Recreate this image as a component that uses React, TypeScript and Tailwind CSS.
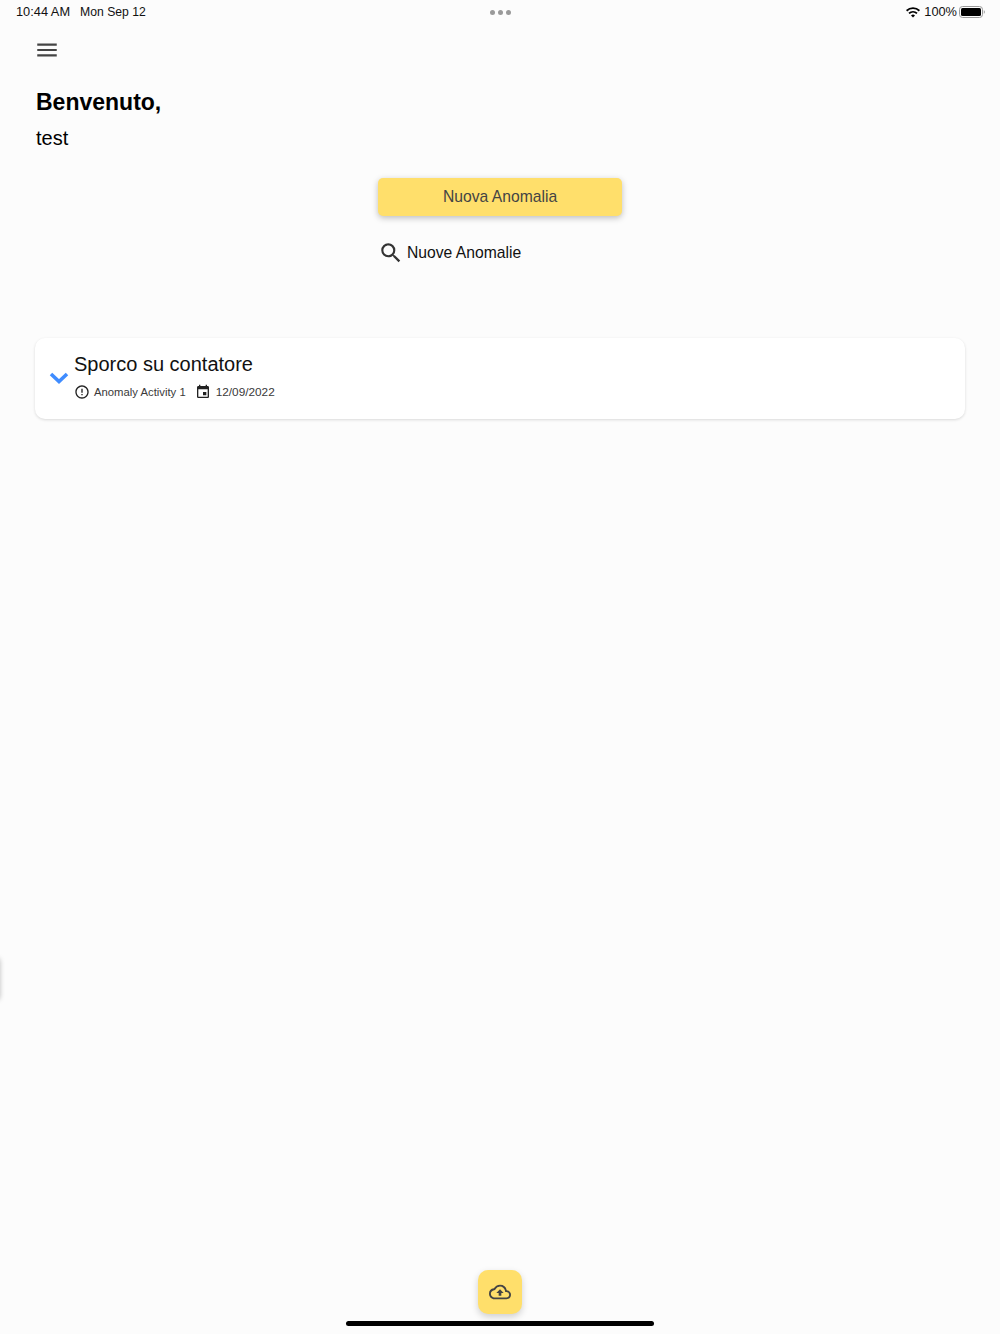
import { MdMenu, MdSearch, MdErrorOutline, MdEvent, MdOutlineCloudUpload } from "react-icons/md";

export default function App() {
  return (
    <div className="relative flex h-[1334px] w-[1000px] flex-col overflow-hidden bg-[#fcfcfc] font-['Liberation_Sans',Arial,sans-serif] text-black">
      {/* status bar */}
      <div className="flex h-6 shrink-0 items-center justify-between pl-4 pr-[15px] text-[13px] leading-6 text-[#111]">
        <div className="flex w-[300px] gap-[10px]">
          <span className="text-[12.8px]">10:44 AM</span>
          <span className="text-[12.2px]">Mon Sep 12</span>
        </div>
        <div className="ml-[-1px] flex gap-[3px]">
          <span className="h-[5px] w-[5px] rounded-full bg-[#9a9a9a]" />
          <span className="h-[5px] w-[5px] rounded-full bg-[#9a9a9a]" />
          <span className="h-[5px] w-[5px] rounded-full bg-[#9a9a9a]" />
        </div>
        <div className="flex w-[300px] items-center justify-end gap-[2px]">
          <svg width="14" height="11" viewBox="0 0 14 11" fill="#000" className="mr-[2px]">
            <path d="M7 10.6 5 8.4a2.9 2.9 0 0 1 4 0L7 10.6Z" />
            <path d="M3.6 7 2.4 5.7a6.8 6.8 0 0 1 9.2 0L10.4 7a5 5 0 0 0-6.8 0Z" />
            <path d="M1.2 4.4 0 3.1a10.3 10.3 0 0 1 14 0l-1.2 1.3a8.5 8.5 0 0 0-11.6 0Z" />
          </svg>
          <span className="text-[12.8px]">100%</span>
          <svg width="26" height="12" viewBox="0 0 26 12">
            <rect x="0.5" y="0.5" width="23" height="11" rx="3" fill="none" stroke="#999" />
            <rect x="2" y="2" width="20" height="8" rx="1.5" fill="#000" />
            <path d="M24.8 4.2c.7.3 1 1 1 1.8s-.3 1.5-1 1.8Z" fill="#999" />
          </svg>
        </div>
      </div>

      {/* menu */}
      <div className="pl-[34px] pt-[13px]">
        <MdMenu className="h-[26px] w-[26px] text-[#444]" />
      </div>

      {/* greeting */}
      <div className="px-[35px] pt-[25px]">
        <h1 className="ml-[1px] text-[23px] font-bold leading-7">Benvenuto,</h1>
        <p className="ml-[1px] mt-[8px] text-[20px] leading-7">test</p>
      </div>

      {/* actions */}
      <div className="flex flex-col items-center pt-[26px]">
        <button className="h-[38px] w-[244px] rounded-[5px] bg-[#ffdf6b] text-[15.7px] text-[#444] shadow-[0_2px_6px_rgba(0,0,0,0.25)]">
          Nuova Anomalia
        </button>
        <div className="mt-[23px] flex h-[28px] w-[244px] items-center">
          <MdSearch className="h-[26px] w-[26px] text-[#333]" />
          <span className="ml-[3px] text-[15.7px] text-[#111]">Nuove Anomalie</span>
        </div>
      </div>

      {/* card */}
      <div className="mx-[35px] mt-[71px] flex h-[81px] items-center rounded-[10px] bg-white pl-[14px] shadow-[0_1px_3px_rgba(0,0,0,0.14)]">
        <svg width="20" height="12" viewBox="0 0 20 12" fill="none" className="mb-[2px] shrink-0">
          <path d="M2 2l8 7.5L18 2" stroke="#3f8cff" strokeWidth="3.6" />
        </svg>
        <div className="ml-[5px] pb-[5px]">
          <div className="text-[20px] leading-6 text-[#111]">Sporco su contatore</div>
          <div className="mt-[8px] flex items-center text-[11.3px] leading-4 text-[#3a3a3a]">
            <MdErrorOutline className="h-4 w-4 text-[#222]" />
            <span className="ml-[4px]">Anomaly Activity 1</span>
            <MdEvent className="ml-[9px] h-4 w-4 text-[#222]" />
            <span className="ml-[5px] text-[11.8px]">12/09/2022</span>
          </div>
        </div>
      </div>

      {/* bottom */}
      <div className="mt-auto flex flex-col items-center pb-2">
        <button className="flex h-11 w-11 items-center justify-center rounded-[10px] bg-[#ffdf6b] shadow-[0_3px_7px_rgba(0,0,0,0.18)]">
          <MdOutlineCloudUpload className="h-[22px] w-[22px] text-[#444]" />
        </button>
        <div className="mt-[7px] h-[5px] w-[308px] rounded-full bg-black" />
      </div>

      {/* peeking off-canvas handle */}
      <div className="absolute left-[-10px] top-[958px] h-[42px] w-[10px] rounded-r bg-white shadow-[0_0_5px_rgba(0,0,0,0.25)]" />
    </div>
  );
}
